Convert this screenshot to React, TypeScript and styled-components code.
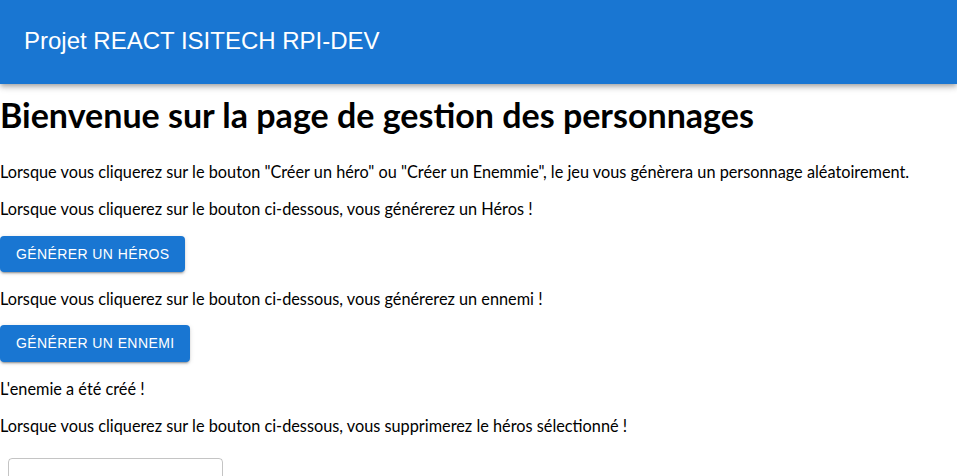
import React from "react";
import styled, { createGlobalStyle } from "styled-components";

const Global = createGlobalStyle`
  html, body { margin: 0; padding: 0; background: #fff; }
  body { font-family: Lato, "Noto Sans", sans-serif; color: #000; }
`;

const AppBar = styled.header`
  height: 84px;
  display: flex;
  align-items: center;
  padding: 0 24px;
  background: #1976d2;
  color: #fff;
  box-shadow: 0px 2px 4px -1px rgba(0,0,0,0.2), 0px 4px 5px 0px rgba(0,0,0,0.14), 0px 1px 10px 0px rgba(0,0,0,0.12);
  position: relative;
  z-index: 1;
`;

const AppTitle = styled.div`
  font-family: "Liberation Sans", Arial, sans-serif;
  font-size: 24px;
  font-weight: 400;
  line-height: 1.334;
  margin-top: -2px;
`;

const Main = styled.main`
  display: flow-root;
`;

const Heading = styled.h1`
  font-size: 34px;
  font-weight: 700;
  line-height: 38px;
  margin: 12px 0 27px;
`;

const Text = styled.p`
  font-size: 16.3px;
  line-height: 21.3px;
  margin: 16px 0;
`;

const Button = styled.button`
  display: block;
  border: 0;
  border-radius: 4px;
  background: #1976d2;
  color: #fff;
  font-family: "Liberation Sans", Arial, sans-serif;
  font-size: 14px;
  font-weight: 500;
  letter-spacing: 0.4px;
  text-transform: uppercase;
  line-height: 24.5px;
  padding: 6px 16px;
  box-shadow: 0px 3px 1px -2px rgba(0,0,0,0.2), 0px 2px 2px 0px rgba(0,0,0,0.14), 0px 1px 5px 0px rgba(0,0,0,0.12);
  cursor: pointer;
`;

const SelectBox = styled.div`
  width: 215px;
  height: 56px;
  box-sizing: border-box;
  margin: 22px 0 0 8px;
  border: 1px solid rgba(0,0,0,0.23);
  border-radius: 4px;
`;

export default function App() {
  return (
    <>
      <Global />
      <AppBar>
        <AppTitle>Projet REACT ISITECH RPI-DEV</AppTitle>
      </AppBar>
      <Main>
        <Heading>Bienvenue sur la page de gestion des personnages</Heading>
        <Text>
          Lorsque vous cliquerez sur le bouton "Créer un héro" ou "Créer un Enemmie", le jeu vous génèrera un personnage aléatoirement.
        </Text>
        <Text>Lorsque vous cliquerez sur le bouton ci-dessous, vous générerez un Héros !</Text>
        <Button>Générer un héros</Button>
        <Text>Lorsque vous cliquerez sur le bouton ci-dessous, vous générerez un ennemi !</Text>
        <Button>Générer un ennemi</Button>
        <Text>L'enemie a été créé !</Text>
        <Text>Lorsque vous cliquerez sur le bouton ci-dessous, vous supprimerez le héros sélectionné !</Text>
        <SelectBox />
      </Main>
    </>
  );
}
